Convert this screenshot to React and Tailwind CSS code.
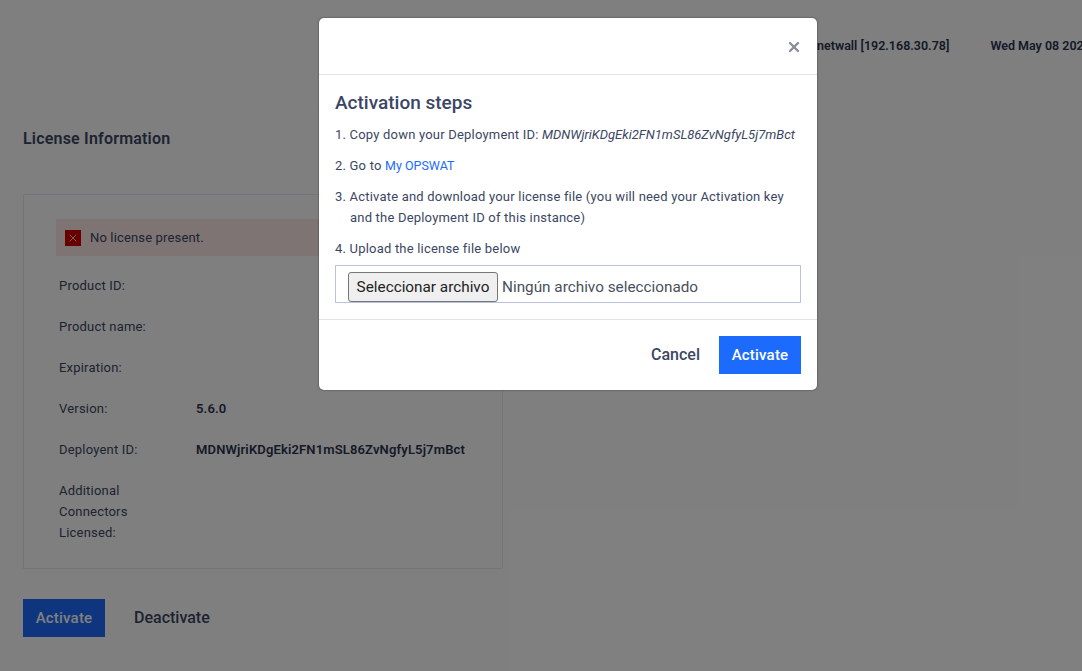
import { X } from "lucide-react"

const font = { fontFamily: '"Roboto", "Liberation Sans", sans-serif' }

function Row({ label, value, tall }) {
  return (
    <div className={`flex ml-[3px] text-[13px] leading-[21px] ${tall ? "" : "h-[41px]"}`}>
      <div className="w-[137px] shrink-0 tracking-[0.2px] text-[#3b4664]">{label}</div>
      {value && <div className="font-semibold tracking-[0.15px] text-[#2b3550] whitespace-nowrap">{value}</div>}
    </div>
  )
}

function Page() {
  return (
    <div className="h-[671px] w-[1082px] overflow-hidden bg-white">
      <div className="h-[92px] pt-[38px] pl-[817px] flex gap-[41px] whitespace-nowrap text-[12.5px] leading-[16px] font-semibold text-[#2b3550]">
        <span>netwall [192.168.30.78]</span>
        <span>Wed May 08 2024</span>
      </div>
      <div className="pl-[23px]">
        <h2 className="pt-[36px] h-[102px] text-[16px] tracking-[0.2px] leading-[22px] font-semibold text-[#3b4664]">License Information</h2>
        <div className="w-[480px] h-[375px] border border-[#e8ebf1] pt-[24px] pl-[32px]">
          <div className="w-[414px] h-[37px] mb-[19px] bg-[#fbe9e7] flex items-center pl-[9px] gap-[9px] text-[13px] tracking-[0.15px] text-[#3b4664]">
            <span className="w-[16px] h-[16px] bg-[#d00000] flex items-center justify-center">
              <X className="w-[12px] h-[12px] text-white" strokeWidth={1.5} />
            </span>
            No license present.
          </div>
          <Row label="Product ID:" />
          <Row label="Product name:" />
          <Row label="Expiration:" />
          <Row label="Version:" value="5.6.0" />
          <Row label="Deployent ID:" value="MDNWjriKDgEki2FN1mSL86ZvNgfyL5j7mBct" />
          <Row label={<>Additional<br />Connectors<br />Licensed:</>} tall />
        </div>
        <div className="mt-[30px] flex items-center gap-[29px] font-medium">
          <button className="w-[82px] h-[38px] bg-[#1d6bfc] text-white text-[15px] tracking-[0.2px]">Activate</button>
          <button className="text-[#3b4664] text-[16px]">Deactivate</button>
        </div>
      </div>
    </div>
  )
}

function Modal() {
  return (
    <div className="absolute left-[319px] top-[18px] w-[498px] h-[372px] bg-white rounded-[5px] flex flex-col shadow-[0_0_2px_rgba(0,0,0,0.6)]">
      <div className="h-[57px] shrink-0 border-b border-[#dfe3ec] flex items-center justify-end pr-[15px]">
        <X className="w-[16px] h-[16px] text-[#8a8f9c] mt-[1px]" strokeWidth={3.6} />
      </div>
      <div className="h-[244px] shrink-0 px-[16px] pt-[16px] text-[13px] tracking-[0.2px] text-[#3b4664]">
        <h3 className="text-[19px] leading-[24px] tracking-normal font-medium mb-[9px]">Activation steps</h3>
        <div className="leading-[21px] mb-[10px] whitespace-nowrap">
          1. Copy down your Deployment ID: <em className="tracking-normal">MDNWjriKDgEki2FN1mSL86ZvNgfyL5j7mBct</em>
        </div>
        <div className="leading-[21px] mb-[10px]">
          2. Go to <a className="text-[#1d6bfc] text-[12.5px] tracking-normal">My OPSWAT</a>
        </div>
        <div className="leading-[21px] mb-[10px] pl-[15px] pr-[12px] -indent-[15px]">
          3. Activate and download your license file (you will need your Activation key and the Deployment ID of this instance)
        </div>
        <div className="leading-[21px] mb-[6px]">4. Upload the license file below</div>
        <div className="h-[38px] border border-[#b8c4dc] pl-[12px] pt-[6px] flex items-start gap-[4px] text-[15.3px] tracking-normal leading-[20px]">
          <button className="w-[150px] h-[30px] bg-[#efefef] border border-[#767676] rounded-[3px] text-[#222] whitespace-nowrap">Seleccionar archivo</button>
          <span className="mt-[5px] text-[#4a4f5c]">Ningún archivo seleccionado</span>
        </div>
      </div>
      <div className="flex-1 border-t border-[#dfe3ec] flex items-center justify-end gap-[19px] px-[16px] font-medium">
        <button className="text-[#3b4664] text-[16px]">Cancel</button>
        <button className="w-[82px] h-[38px] bg-[#1d6bfc] text-white text-[15px] tracking-[0.2px]">Activate</button>
      </div>
    </div>
  )
}

export default function App() {
  return (
    <div className="relative h-[671px] w-[1082px] overflow-hidden" style={font}>
      <Page />
      <div className="absolute inset-0 bg-black/50" />
      <Modal />
    </div>
  )
}
